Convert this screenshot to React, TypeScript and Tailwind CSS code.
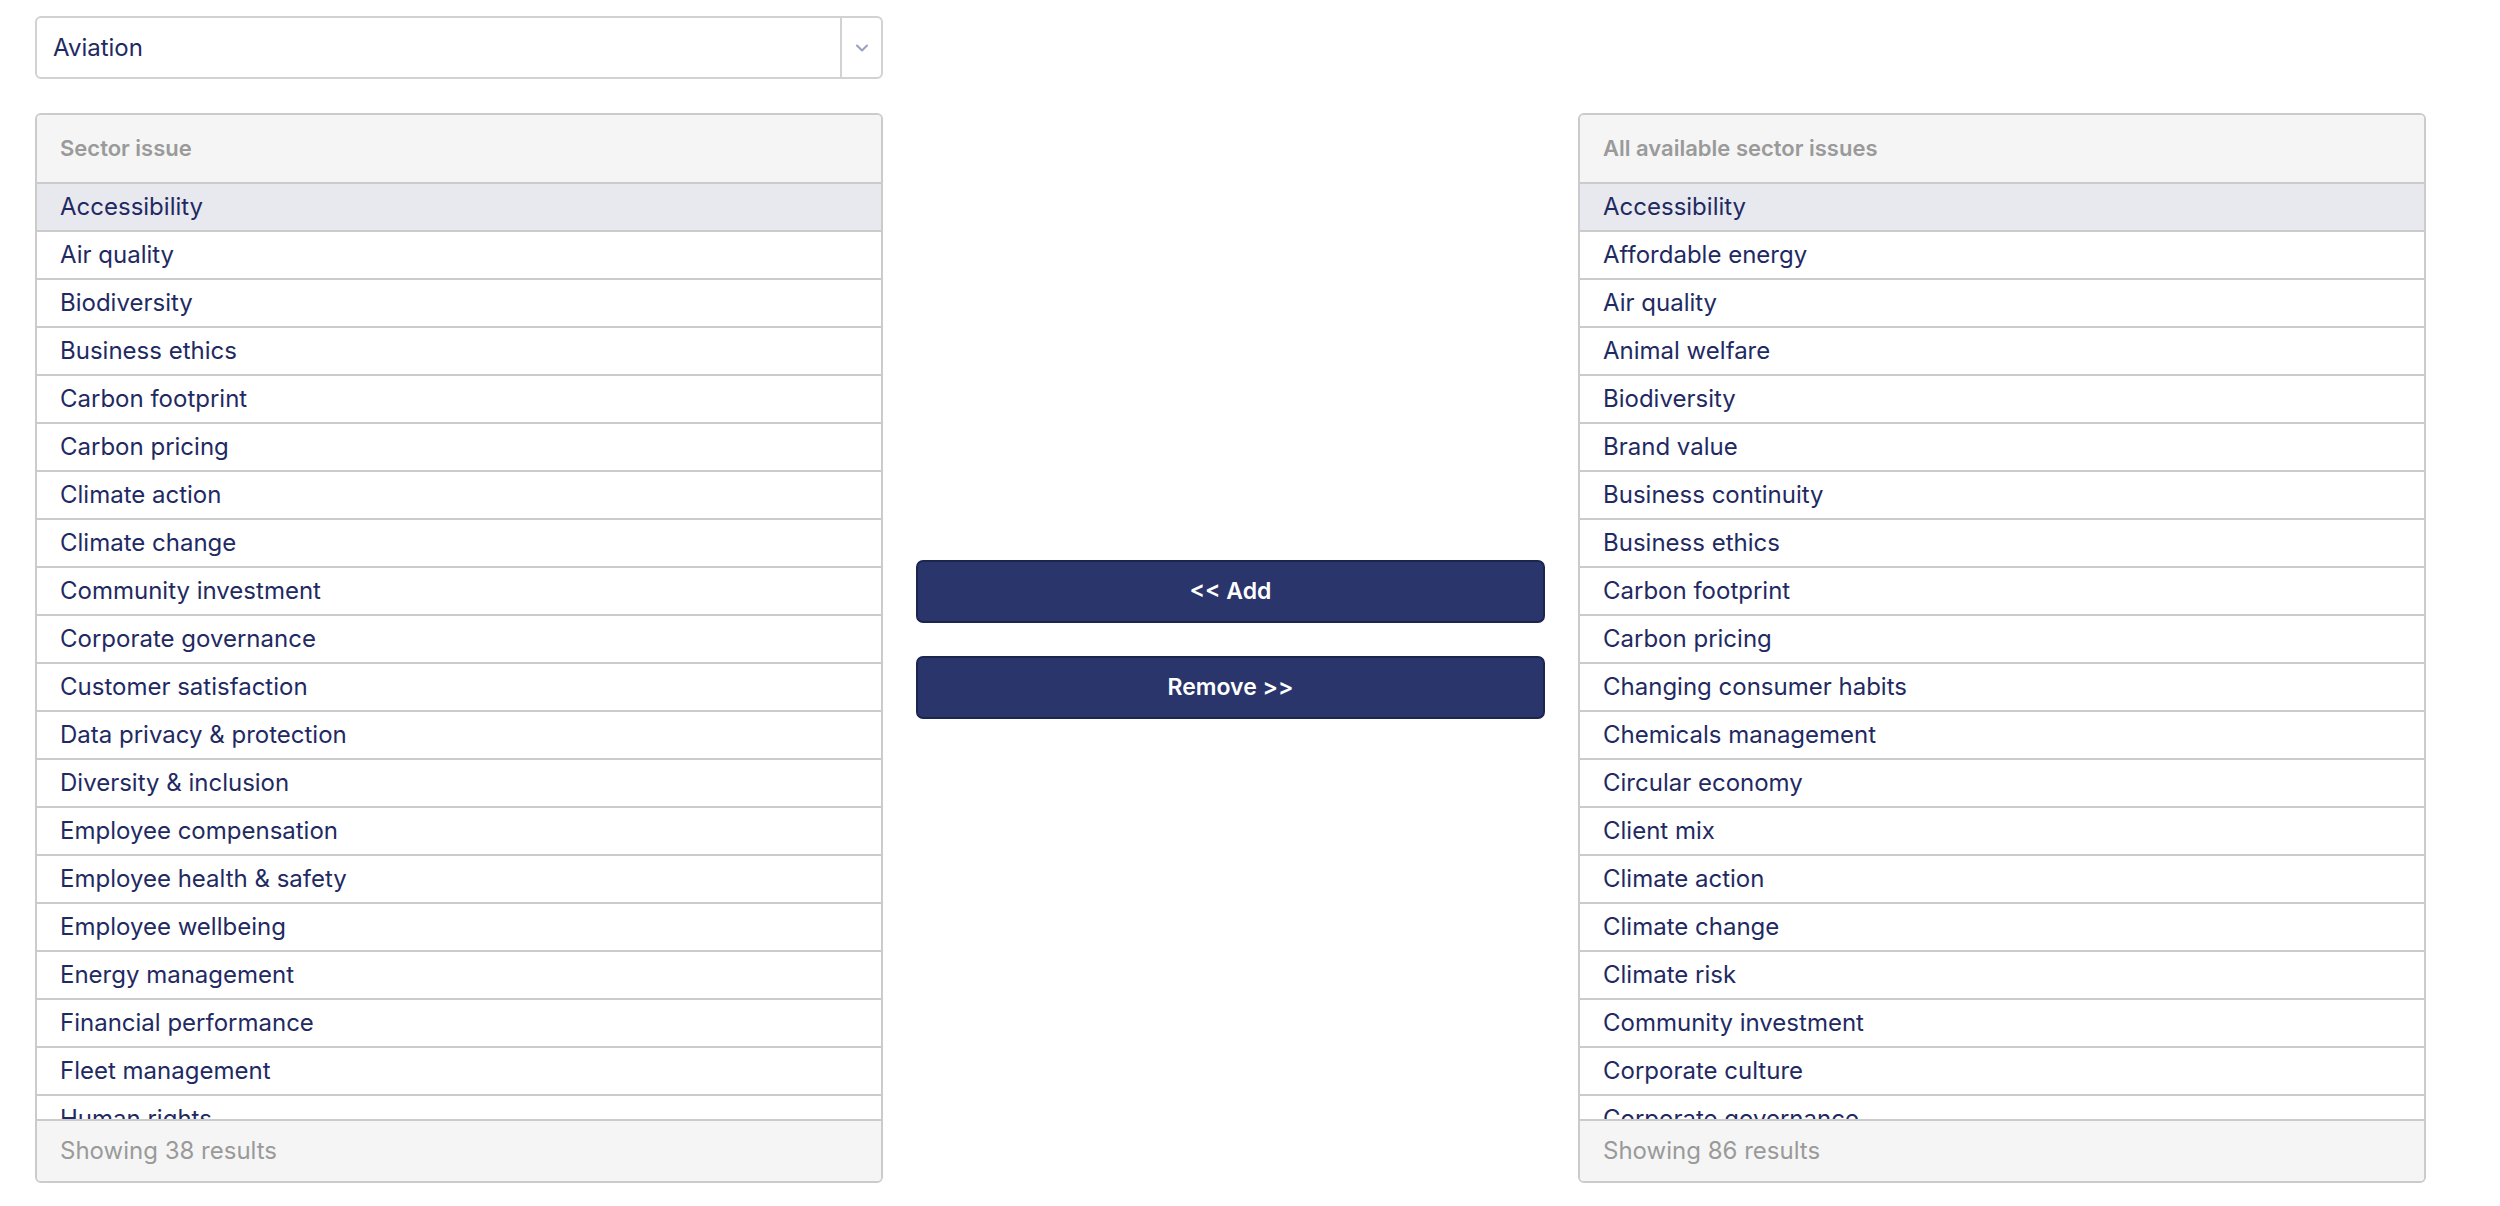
import { ChevronDown } from 'lucide-react';

const sectorIssues = [
  'Accessibility',
  'Air quality',
  'Biodiversity',
  'Business ethics',
  'Carbon footprint',
  'Carbon pricing',
  'Climate action',
  'Climate change',
  'Community investment',
  'Corporate governance',
  'Customer satisfaction',
  'Data privacy & protection',
  'Diversity & inclusion',
  'Employee compensation',
  'Employee health & safety',
  'Employee wellbeing',
  'Energy management',
  'Financial performance',
  'Fleet management',
  'Human rights',
  'Innovation',
  'Noise pollution',
];

const availableIssues = [
  'Accessibility',
  'Affordable energy',
  'Air quality',
  'Animal welfare',
  'Biodiversity',
  'Brand value',
  'Business continuity',
  'Business ethics',
  'Carbon footprint',
  'Carbon pricing',
  'Changing consumer habits',
  'Chemicals management',
  'Circular economy',
  'Client mix',
  'Climate action',
  'Climate change',
  'Climate risk',
  'Community investment',
  'Corporate culture',
  'Corporate governance',
  'Customer satisfaction',
  'Cyber security',
];

interface IssueListProps {
  title: string;
  items: string[];
  total: number;
}

const IssueList = ({ title, items, total }: IssueListProps) => {
  return (
    <div className="flex h-[1070px] w-[848px] flex-col overflow-hidden rounded-[6px] border-2 border-[#cbcbcb]">
      <div className="flex h-[69px] shrink-0 items-center border-b-2 border-[#cbcbcb] bg-[#f5f5f5] px-[23px] text-[22px] font-semibold text-[#9a9a9a]">
        {title}
      </div>
      <div className="flex-1 overflow-hidden">
        {items.map((item, i) => (
          <div
            key={item}
            className={`flex h-[48px] items-center border-b-2 border-[#cbcbcb] px-[23px] text-[24px] text-[#1f2a63] ${i === 0 ? 'bg-[#e8e9ee]' : 'bg-white'}`}
          >
            {item}
          </div>
        ))}
      </div>
      <div className="flex h-[62px] shrink-0 items-center border-t-2 border-[#cbcbcb] bg-[#f5f5f5] px-[23px] text-[24px] text-[#9a9a9a]">
        Showing {total} results
      </div>
    </div>
  );
};

export default function App() {
  return (
    <div className="min-h-screen bg-white pl-[35px] pt-[16px] font-['Inter',sans-serif]">
      {/* Sector select */}
      <div className="flex h-[63px] w-[848px] items-stretch rounded-[6px] border-2 border-[#d2d2d2] bg-white">
        <div className="flex flex-1 items-center px-[16px] text-[24px] text-[#1f2a63]">Aviation</div>
        <div className="flex w-[41px] items-center justify-center border-l-2 border-[#d2d2d2]">
          <ChevronDown className="h-[20px] w-[20px] text-[#9aa0c0]" strokeWidth={2.5} />
        </div>
      </div>

      <div className="mt-[34px] flex items-stretch gap-[33px]">
        <IssueList title="Sector issue" items={sectorIssues} total={38} />

        <div className="flex w-[629px] flex-col justify-center gap-[33px] pb-[17px]">
          <button className="h-[63px] rounded-[7px] border-2 border-[#1c2550] bg-[#2a356b] text-[23px] font-semibold text-white">
            {'<< Add'}
          </button>
          <button className="h-[63px] rounded-[7px] border-2 border-[#1c2550] bg-[#2a356b] text-[23px] font-semibold text-white">
            {'Remove >>'}
          </button>
        </div>

        <IssueList title="All available sector issues" items={availableIssues} total={86} />
      </div>
    </div>
  );
}
